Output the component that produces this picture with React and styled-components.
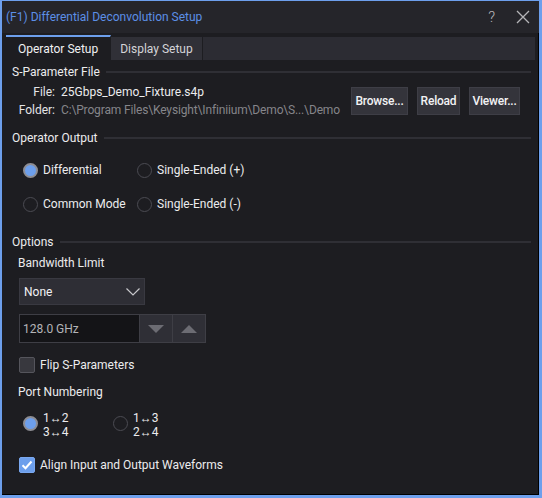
import styled, { createGlobalStyle } from 'styled-components'

const GlobalStyle = createGlobalStyle`
  html, body {
    margin: 0;
    padding: 0;
    background: #1d1d21;
  }
  body {
    font-family: Roboto, 'Liberation Sans', sans-serif;
    font-size: 12px;
    color: #e4e4e6;
  }
  * {
    box-sizing: border-box;
  }
`

const Window = styled.div`
  width: 542px;
  height: 498px;
  border-style: solid;
  border-color: #6d9fec;
  border-width: 1px 3px 3px 2px;
  background: #1d1d21;
  box-shadow: inset -1px -1px 0 #000;
  display: flex;
  flex-direction: column;
`

const TitleBar = styled.div`
  height: 32px;
  flex-shrink: 0;
  background: #25252a;
  display: flex;
  align-items: center;
  padding: 0 9px 1px 4px;
`

const Title = styled.div`
  color: #5c8fe6;
  font-size: 12px;
`

const TitleButtons = styled.div`
  margin-left: auto;
  display: flex;
  align-items: center;
  gap: 21px;
  color: #b5b5b8;
`

const Help = styled.span`
  font-size: 15px;
  font-weight: 300;
`

const Tabs = styled.div`
  height: 26px;
  margin: 1px 4px 0 4px;
  display: flex;
  align-items: flex-end;
`

const Tab = styled.div`
  height: ${(p) => (p.$active ? 25 : 23)}px;
  padding: 0 ${(p) => (p.$active ? 12 : 9)}px;
  display: flex;
  align-items: center;
  background: ${(p) => (p.$active ? '#1d1d21' : '#303037')};
  border-top: ${(p) => (p.$active ? '2px solid #6d9fec' : 'none')};
  border-right: 1px solid #1d1d21;
  color: ${(p) => (p.$active ? '#f0f0f2' : '#d4d4d8')};
`

const TabFill = styled.div`
  flex: 1;
  height: 23px;
  background: #2c2c33;
`

const Body = styled.div`
  padding: 0 8px 0 10px;
  display: flex;
  flex-direction: column;
`

const SectionHead = styled.div`
  height: 16px;
  margin-top: ${(p) => p.$top}px;
  display: flex;
  align-items: center;
  gap: 6px;
  color: #ececee;
  &::after {
    content: '';
    flex: 1;
    height: 2px;
    background: #2f2f35;
  }
`

const FileBlock = styled.div`
  margin-top: 3px;
  display: flex;
  align-items: center;
`

const FileGrid = styled.div`
  flex: 1;
  min-width: 0;
  display: grid;
  grid-template-columns: 43px auto;
  column-gap: 6px;
  grid-auto-rows: 18px;
  align-items: center;
`

const FileLabel = styled.div`
  text-align: right;
  color: #e4e4e6;
`

const FileValue = styled.div`
  color: ${(p) => (p.$dim ? '#85858a' : '#ececee')};
  letter-spacing: ${(p) => (p.$dim ? '-0.15px' : '0')};
  white-space: nowrap;
`

const Buttons = styled.div`
  flex-shrink: 0;
  margin-left: 4px;
  margin-right: 11px;
  display: flex;
  gap: 9px;
`

const Button = styled.div`
  width: ${(p) => p.$w}px;
  height: 28px;
  display: flex;
  align-items: center;
  justify-content: center;
  background: #34343b;
  border: 1px solid #3e3e46;
  color: #f2f2f4;
  font-weight: 500;
  letter-spacing: -0.2px;
  white-space: nowrap;
`

const RadioGrid = styled.div`
  margin: ${(p) => p.$top}px 0 0 ${(p) => p.$left}px;
  display: grid;
  grid-template-columns: ${(p) => p.$col}px auto;
  row-gap: 14px;
`

const RadioItem = styled.div`
  height: ${(p) => (p.$tall ? 28 : 20)}px;
  display: flex;
  align-items: center;
  gap: 5px;
  color: #ececee;
`

const RadioDot = styled.span`
  width: 15px;
  height: 15px;
  flex-shrink: 0;
  border-radius: 50%;
  border: ${(p) => (p.$on ? '2px solid #8d8d93' : '1.5px solid #4b4b52')};
  background: ${(p) => (p.$on ? '#6d9fec' : 'transparent')};
  margin-top: ${(p) => (p.$shift ? -3 : 0)}px;
`

const PortText = styled.div`
  line-height: 14px;
`

const Options = styled.div`
  padding-left: 6px;
  display: flex;
  flex-direction: column;
`

const Label = styled.div`
  height: 16px;
  line-height: 16px;
  margin-top: ${(p) => p.$top}px;
  color: #ececee;
`

const Select = styled.div`
  width: 126px;
  height: 27px;
  margin: 7px 0 0 1px;
  padding: 0 4px;
  display: flex;
  align-items: center;
  justify-content: space-between;
  background: #2e2e35;
  border: 1px solid #393941;
  color: #f2f2f4;
`

const Spin = styled.div`
  width: 187px;
  height: 29px;
  margin: 9px 0 0 1px;
  display: flex;
  border: 1px solid #3e3e45;
`

const SpinInput = styled.div`
  width: 119px;
  display: flex;
  align-items: center;
  padding-left: 3px;
  background: #141417;
  color: #b4b4b8;
`

const SpinButton = styled.div`
  flex: 1;
  display: flex;
  align-items: center;
  justify-content: center;
  background: #2f2f36;
  border-left: 1px solid #3e3e45;
`

const CheckRow = styled.label`
  height: 16px;
  margin: ${(p) => p.$top}px 0 0 1px;
  display: flex;
  align-items: center;
  gap: 5px;
  color: #ececee;
`

const CheckBox = styled.span`
  width: 16px;
  height: 16px;
  border-radius: 2px;
  display: flex;
  align-items: center;
  justify-content: center;
  background: ${(p) => (p.$on ? '#6d9fec' : '#38383e')};
  border: 1px solid ${(p) => (p.$on ? '#7aa8f0' : '#55555c')};
`

function Radio({ on, children, tall }) {
  return (
    <RadioItem $tall={tall}>
      <RadioDot $on={on} $shift={tall} />
      {children}
    </RadioItem>
  )
}

export default function App() {
  return (
    <>
      <GlobalStyle />
      <Window>
        <TitleBar>
          <Title>(F1) Differential Deconvolution Setup</Title>
          <TitleButtons>
            <Help>?</Help>
            <svg width='14' height='14' viewBox='0 0 14 14'>
              <path d='M1 1L13 13M13 1L1 13' stroke='#b5b5b8' strokeWidth='1.3' />
            </svg>
          </TitleButtons>
        </TitleBar>
        <Tabs>
          <Tab $active>Operator Setup</Tab>
          <Tab>Display Setup</Tab>
          <TabFill />
        </Tabs>
        <Body>
          <SectionHead $top={4}>S-Parameter File</SectionHead>
          <FileBlock>
            <FileGrid>
              <FileLabel>File:</FileLabel>
              <FileValue>25Gbps_Demo_Fixture.s4p</FileValue>
              <FileLabel>Folder:</FileLabel>
              <FileValue $dim>C:\Program Files\Keysight\Infiniium\Demo\S...\Demo</FileValue>
            </FileGrid>
            <Buttons>
              <Button $w={57}>Browse...</Button>
              <Button $w={43}>Reload</Button>
              <Button $w={51}>Viewer...</Button>
            </Buttons>
          </FileBlock>

          <SectionHead $top={11}>Operator Output</SectionHead>
          <RadioGrid $col={114} $top={14} $left={11}>
            <Radio on>Differential</Radio>
            <Radio>Single-Ended (+)</Radio>
            <Radio>Common Mode</Radio>
            <Radio>Single-Ended (-)</Radio>
          </RadioGrid>

          <SectionHead $top={20}>Options</SectionHead>
          <Options>
            <Label $top={5}>Bandwidth Limit</Label>
            <Select>
              None
              <svg width='14' height='8' viewBox='0 0 14 8'>
                <path d='M0.5 0.5L7 7L13.5 0.5' stroke='#c8c8cc' strokeWidth='1.2' fill='none' />
              </svg>
            </Select>
            <Spin>
              <SpinInput>128.0 GHz</SpinInput>
              <SpinButton>
                <svg width='16' height='8' viewBox='0 0 16 8'>
                  <path d='M0 0H16L8 8Z' fill='#6c6c73' />
                </svg>
              </SpinButton>
              <SpinButton>
                <svg width='16' height='8' viewBox='0 0 16 8'>
                  <path d='M0 8H16L8 0Z' fill='#6c6c73' />
                </svg>
              </SpinButton>
            </Spin>
            <CheckRow $top={14}>
              <CheckBox />
              Flip S-Parameters
            </CheckRow>
            <Label $top={11}>Port Numbering</Label>
            <RadioGrid $col={90} $top={11} $left={5}>
              <Radio on tall>
                <PortText>1↔2<br />3↔4</PortText>
              </Radio>
              <Radio tall>
                <PortText>1↔3<br />2↔4</PortText>
              </Radio>
            </RadioGrid>
            <CheckRow $top={18}>
              <CheckBox $on>
                <svg width='12' height='10' viewBox='0 0 12 10'>
                  <path d='M1.5 5.2L4.5 8.2L10.5 1.5' stroke='#fff' strokeWidth='2' fill='none' />
                </svg>
              </CheckBox>
              Align Input and Output Waveforms
            </CheckRow>
          </Options>
        </Body>
      </Window>
    </>
  )
}
